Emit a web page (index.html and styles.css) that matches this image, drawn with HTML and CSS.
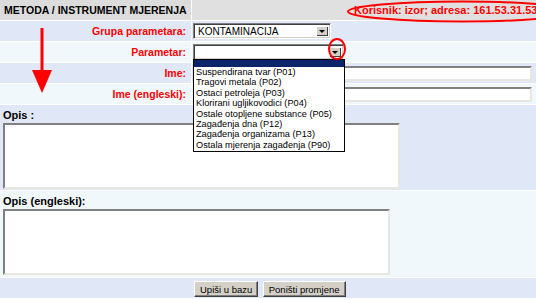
FILE: index.html
```html
<!DOCTYPE html>
<html lang="hr">
<head>
    <meta charset="UTF-8">
    <title>Metoda / instrument mjerenja</title>
    <link rel="stylesheet" href="styles.css">
</head>
<body>

<div class="page">
    <table class="form">
        <colgroup>
            <col class="col-label">
            <col class="col-value">
        </colgroup>
        <tr class="head">
            <td class="head-title">METODA / INSTRUMENT MJERENJA</td>
            <td class="head-user">Korisnik: izor; adresa: 161.53.31.53</td>
        </tr>
        <tr class="blue">
            <td class="label">Grupa parametara:</td>
            <td class="value">
                <div class="combo combo-group">
                    <span class="combo-text">KONTAMINACIJA</span>
                    <span class="combo-btn"></span>
                </div>
            </td>
        </tr>
        <tr class="light">
            <td class="label">Parametar:</td>
            <td class="value">
                <div class="combo combo-param">
                    <span class="combo-text"></span>
                    <span class="combo-btn"></span>
                </div>
            </td>
        </tr>
        <tr class="blue">
            <td class="label">Ime:</td>
            <td class="value"><input type="text" class="field"></td>
        </tr>
        <tr class="light">
            <td class="label">Ime (engleski):</td>
            <td class="value"><input type="text" class="field"></td>
        </tr>
        <tr class="blue area-row">
            <td colspan="2">
                <div class="area-label">Opis :</div>
                <textarea class="area area-wide"></textarea>
            </td>
        </tr>
        <tr class="light area-row">
            <td colspan="2">
                <div class="area-label">Opis (engleski):</div>
                <textarea class="area area-narrow"></textarea>
            </td>
        </tr>
        <tr class="blue">
            <td colspan="2" class="buttons">
                <button class="btn">Upiši u bazu</button>
                <button class="btn">Poništi promjene</button>
            </td>
        </tr>
    </table>

    <ul class="dropdown">
        <li class="selected">&nbsp;</li>
        <li>Suspendirana tvar (P01)</li>
        <li>Tragovi metala (P02)</li>
        <li>Ostaci petroleja (P03)</li>
        <li>Klorirani ugljikovodici (P04)</li>
        <li>Ostale otopljene substance (P05)</li>
        <li>Zagađenja dna (P12)</li>
        <li>Zagađenja organizama (P13)</li>
        <li>Ostala mjerenja zagađenja (P90)</li>
    </ul>

    <svg class="marks" width="536" height="300" viewBox="0 0 536 300">
        <!-- annotation: arrow down the label column -->
        <line x1="42" y1="28" x2="42" y2="74" stroke="#ff0000" stroke-width="3"/>
        <polygon points="32,70 52,70 42,93" fill="#ff0000"/>
        <!-- annotation: circle round the combo button -->
        <ellipse cx="337" cy="49" rx="8" ry="10" fill="none" stroke="#ff0000" stroke-width="2"/>
        <!-- annotation: ellipse round the user info -->
        <ellipse cx="462" cy="11.5" rx="114" ry="10" fill="none" stroke="#ff0000" stroke-width="2"/>
    </svg>
</div>

</body>
</html>
```

FILE: styles.css
```css
body {
    margin: 0;
    padding: 0;
    background: #ffffff;
    font-family: 'Liberation Sans', Arial, sans-serif;
}

.page {
    position: relative;
    width: 536px;
    height: 300px;
    overflow: hidden;
}

.form {
    width: 540px;
    margin-left: -1px;
    margin-top: -1px;
    table-layout: fixed;
    border-collapse: separate;
    border-spacing: 1px;
}

.col-label {
    width: 191px;
}

.form td {
    padding: 0;
    height: 20px;
    vertical-align: middle;
    white-space: nowrap;
    overflow: hidden;
}

.head td {
    background: #dcdcdc;
    font-weight: bold;
}

.head-title {
    padding-left: 4px !important;
    font-size: 10.5px;
    color: #000000;
}

.head-user {
    background: #e0e0e0 !important;
    color: #ff0000;
    font-size: 11px;
    text-align: left;
    padding-left: 162px !important;
}

.blue td {
    background: #e0e8f8;
}

.light td {
    background: #f0f8fc;
}

.label {
    color: #ff0000;
    font-size: 10.5px;
    font-weight: bold;
    text-align: right;
    padding-right: 5px !important;
}

.value {
    padding-left: 1px !important;
}

.combo {
    display: flex;
    align-items: stretch;
    height: 16px;
    box-sizing: border-box;
    background: #ffffff;
    border-top: 1px solid #808080;
    border-left: 1px solid #808080;
    border-right: 1px solid #ffffff;
    border-bottom: 1px solid #ffffff;
    box-shadow: inset 1px 1px 0 #404040, inset -1px -1px 0 #d4d0c8;
    padding: 2px;
}

.combo-group {
    width: 138px;
}

.combo-param {
    width: 151px;
}

.combo-text {
    flex: 1;
    font-size: 10px;
    line-height: 11px;
    padding-left: 2px;
    color: #000000;
}

.combo-btn {
    width: 12px;
    background: #d4d0c8;
    box-shadow: inset 1px 1px 0 #ffffff, inset -1px -1px 0 #404040;
    position: relative;
}

.combo-btn::after {
    content: "";
    position: absolute;
    left: 3px;
    top: 4px;
    border-left: 3px solid transparent;
    border-right: 3px solid transparent;
    border-top: 3px solid #000000;
}

.field {
    display: block;
    width: 339px;
    height: 15px;
    box-sizing: border-box;
    margin: 0;
    padding: 0;
    background: #ffffff;
    border-top: 2px solid #808080;
    border-left: 2px solid #808080;
    border-right: 2px solid #e8e6e0;
    border-bottom: 2px solid #e8e6e0;
}

.area-row td {
    height: auto;
    vertical-align: top;
    padding: 3px 0 1px 3px;
}

.area-label {
    font-size: 11px;
    font-weight: bold;
    color: #000000;
    height: 15px;
    line-height: 15px;
}

.area {
    display: block;
    margin: 0;
    padding: 0;
    resize: none;
    box-sizing: border-box;
    background: #ffffff;
    border-top: 2px solid #808080;
    border-left: 2px solid #808080;
    border-right: 2px solid #e8e6e0;
    border-bottom: 2px solid #e8e6e0;
}

.area-wide {
    width: 397px;
    height: 66px;
}

.area-narrow {
    width: 387px;
    height: 66px;
    margin-bottom: 1px;
}

.buttons {
    text-align: left;
    padding-left: 194px !important;
}

.btn {
    font-family: 'Liberation Sans', Arial, sans-serif;
    font-size: 9.5px;
    height: 16px;
    padding: 0 5px;
    margin: 0;
    background: #d4d0c8;
    color: #000000;
    border: 1px solid;
    border-color: #ffffff #404040 #404040 #ffffff;
    box-shadow: inset -1px -1px 0 #808080;
}

.dropdown {
    position: absolute;
    left: 193px;
    top: 59px;
    width: 152px;
    margin: 0;
    padding: 0 0 1px 0;
    box-sizing: border-box;
    list-style: none;
    background: #ffffff;
    border: 1px solid #000000;
    font-size: 9.2px;
}

.dropdown li {
    height: 10.4px;
    line-height: 10.4px;
    padding-left: 2px;
    white-space: nowrap;
    color: #000000;
}

.dropdown li.selected {
    height: 7px;
    background: #0a246a;
}

.marks {
    position: absolute;
    left: 0;
    top: 0;
    pointer-events: none;
}
```
